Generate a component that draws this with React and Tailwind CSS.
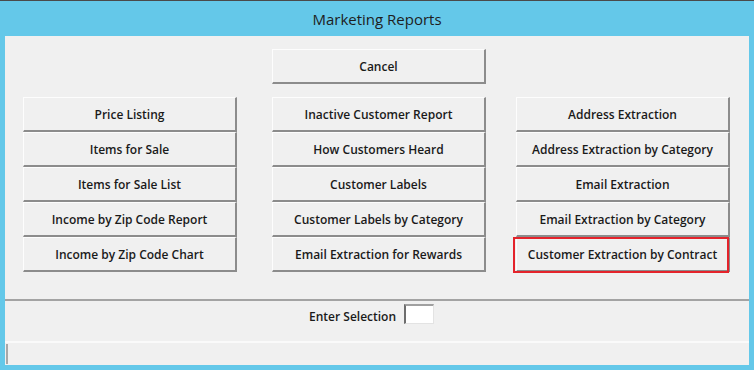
const left = [
  "Price Listing",
  "Items for Sale",
  "Items for Sale List",
  "Income by Zip Code Report",
  "Income by Zip Code Chart",
];

const middle = [
  "Inactive Customer Report",
  "How Customers Heard",
  "Customer Labels",
  "Customer Labels by Category",
  "Email Extraction for Rewards",
];

const right = [
  "Address Extraction",
  "Address Extraction by Category",
  "Email Extraction",
  "Email Extraction by Category",
  "Customer Extraction by Contract",
];

function WinButton({ label, highlight }) {
  return (
    <div className="relative">
      <button className="w-[214px] h-[35px] pt-[2px] bg-[#f0f0f0] border-t border-l border-t-[#fdfdfd] border-l-[#fdfdfd] border-r-2 border-b-2 border-r-[#8c8c8c] border-b-[#8c8c8c] text-[12px] font-semibold text-[#1a1a1a]">
        {label}
      </button>
      {highlight && (
        <div className="absolute left-[-3px] top-0 w-[216px] h-[36px] border-2 border-[#e4232b] pointer-events-none" />
      )}
    </div>
  );
}

function Column({ items, mark, className }) {
  return (
    <div className={"flex flex-col " + (className || "")}>
      {items.map((label, i) => (
        <WinButton key={label} label={label} highlight={mark && i === items.length - 1} />
      ))}
    </div>
  );
}

export default function App() {
  return (
    <div
      className="w-[754px] h-[370px] bg-[#64c8e9] border-t border-t-[#4a4a4a] flex flex-col"
      style={{ fontFamily: '"Open Sans", "Noto Sans", sans-serif' }}
    >
      {/* Title bar */}
      <div className="h-[35px] pt-[2px] flex items-center justify-center text-[15px] text-[#1e1e1e]">
        Marketing Reports
      </div>

      {/* Dialog body */}
      <div className="flex-1 mx-[5px] mb-[5px] bg-[#f0f0f0] flex flex-col">
        <div className="h-[263px] flex flex-col">
          <div className="pt-[13px] flex pl-[267px]">
            <WinButton label="Cancel" />
          </div>

          <div className="mt-[13px] flex pl-[18px]">
            <Column items={left} />
            <Column items={middle} className="ml-[35px]" />
            <Column items={right} mark className="ml-[30px]" />
          </div>
        </div>

        {/* Separator */}
        <div className="h-[2px] bg-[#a3a3a3]" />

        {/* Selection row */}
        <div className="h-[40px] flex items-start pl-[304px] pt-[3px]">
          <span className="mt-[4px] text-[12px] font-semibold text-[#1a1a1a]">
            Enter Selection
          </span>
          <input className="ml-[8px] w-[30px] h-[20px] bg-white border-t-2 border-l-2 border-t-[#a0a0a0] border-l-[#6d6d6d] border-r border-b border-r-[#e3e3e3] border-b-[#e3e3e3] outline-none" />
        </div>

        {/* Status bar */}
        <div className="flex-1 border-t-2 border-t-[#fafafa] flex">
          <div className="mt-[1px] ml-[1px] w-[2px] h-[20px] bg-[#a8a8a8]" />
        </div>
      </div>
    </div>
  );
}
